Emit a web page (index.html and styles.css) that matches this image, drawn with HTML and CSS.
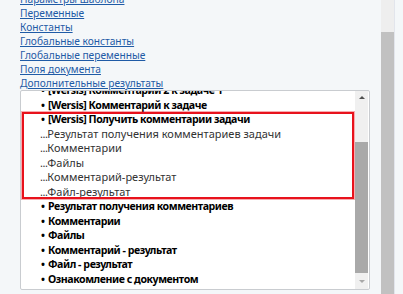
FILE: index.html
```html
<!DOCTYPE html>
<html lang="ru">
<head>
<meta charset="utf-8">
<link rel="stylesheet" href="styles.css">
</head>
<body>
<div class="page">
  <div class="content">
    <ul class="links">
      <li><a href="#">Параметры шаблона</a></li>
      <li><a href="#">Переменные</a></li>
      <li><a href="#">Константы</a></li>
      <li><a href="#">Глобальные константы</a></li>
      <li><a href="#">Глобальные переменные</a></li>
      <li><a href="#">Поля документа</a></li>
      <li><a href="#">Дополнительные результаты</a></li>
    </ul>
    <div class="listbox">
      <div class="items">
        <div class="rows">
          <div class="row bold first"><span class="mark">•</span>[Wersis] Комментарий 2 к задаче 1</div>
          <div class="row bold"><span class="mark">•</span>[Wersis] Комментарий к задаче</div>
          <div class="group">
            <div class="row bold"><span class="mark">•</span>[Wersis] Получить комментарии задачи</div>
            <div class="row sub"><span class="dots">...</span>Результат получения комментариев задачи</div>
            <div class="row sub"><span class="dots">...</span>Комментарии</div>
            <div class="row sub"><span class="dots">...</span>Файлы</div>
            <div class="row sub"><span class="dots">...</span>Комментарий-результат</div>
            <div class="row sub"><span class="dots">...</span>Файл-результат</div>
          </div>
          <div class="row bold"><span class="mark">•</span>Результат получения комментариев</div>
          <div class="row bold"><span class="mark">•</span>Комментарии</div>
          <div class="row bold"><span class="mark">•</span>Файлы</div>
          <div class="row bold"><span class="mark">•</span>Комментарий - результат</div>
          <div class="row bold"><span class="mark">•</span>Файл - результат</div>
          <div class="row bold"><span class="mark">•</span>Ознакомление с документом</div>
        </div>
      </div>
      <div class="vscroll">
        <div class="arrow up"></div>
        <div class="track top"></div>
        <div class="thumb"></div>
        <div class="track bottom"></div>
        <div class="arrow down"></div>
      </div>
    </div>
  </div>
  <div class="pagescroll">
    <div class="ps-track"></div>
    <div class="ps-thumb"></div>
  </div>
</div>
</body>
</html>
```
FILE: styles.css
```css
html, body {
  margin: 0;
  padding: 0;
  height: 100%;
  overflow: hidden;
  background: #f4f7f9;
}
body {
  font-family: "Noto Sans", "Open Sans", sans-serif;
  font-size: 11px;
  color: #111;
}
.page {
  display: flex;
  height: 294px;
}
.content {
  width: 350px;
  margin-left: 20px;
  margin-right: 11px;
}
.links {
  list-style: none;
  margin: -8px 0 0 0;
  padding: 0;
}
.links li {
  height: 14px;
  line-height: 14px;
}
.links a {
  color: #1f5ba6;
  text-decoration: underline;
  text-underline-offset: 1px;
  font-size: 10.2px;
}
.listbox {
  display: flex;
  height: 198px;
  border: 1px solid #c9ccd0;
  border-radius: 2px;
  background: #fff;
}
.items {
  flex: 1;
  overflow: hidden;
}
.rows {
  margin-top: -8px;
}
.row {
  height: 14.5px;
  line-height: 14.5px;
  white-space: nowrap;
  padding-left: 19px;
}
.row.bold {
  font-weight: bold;
  font-size: 10.6px;
  letter-spacing: -0.45px;
  color: #000;
}
.row.bold .mark {
  letter-spacing: 0;
}
.row.sub {
  color: #333;
}
.mark {
  display: inline-block;
  width: 7px;
  padding-left: 1px;
}
.dots {
  letter-spacing: -0.5px;
}
.group {
  position: relative;
}
.group::after {
  content: "";
  position: absolute;
  left: 1px;
  right: 1px;
  top: 0;
  bottom: 0;
  border: 2px solid #e8121c;
  box-shadow: 0 0 0 1px rgba(232, 18, 28, 0.35);
  pointer-events: none;
}
.vscroll {
  width: 13px;
  margin-right: 1px;
  display: flex;
  flex-direction: column;
  background: #f0f0f0;
}
.arrow {
  height: 14px;
  position: relative;
}
.arrow::before {
  content: "";
  position: absolute;
  left: 4px;
  width: 0;
  height: 0;
  border-left: 3px solid transparent;
  border-right: 3px solid transparent;
}
.arrow.up::before {
  top: 5px;
  border-bottom: 3px solid #505050;
}
.arrow.down::before {
  top: 5px;
  border-top: 3px solid #a8a8a8;
}
.track.top {
  height: 37px;
}
.thumb {
  height: 131px;
  background: #a9a9a9;
}
.track.bottom {
  flex: 1;
}
.pagescroll {
  width: 13px;
  display: flex;
  flex-direction: column;
  border-right: 1px solid #e2e5ec;
}
.ps-track {
  height: 32px;
  background: #eeeeee;
}
.ps-thumb {
  flex: 1;
  background: #c1c1c1;
}
```
